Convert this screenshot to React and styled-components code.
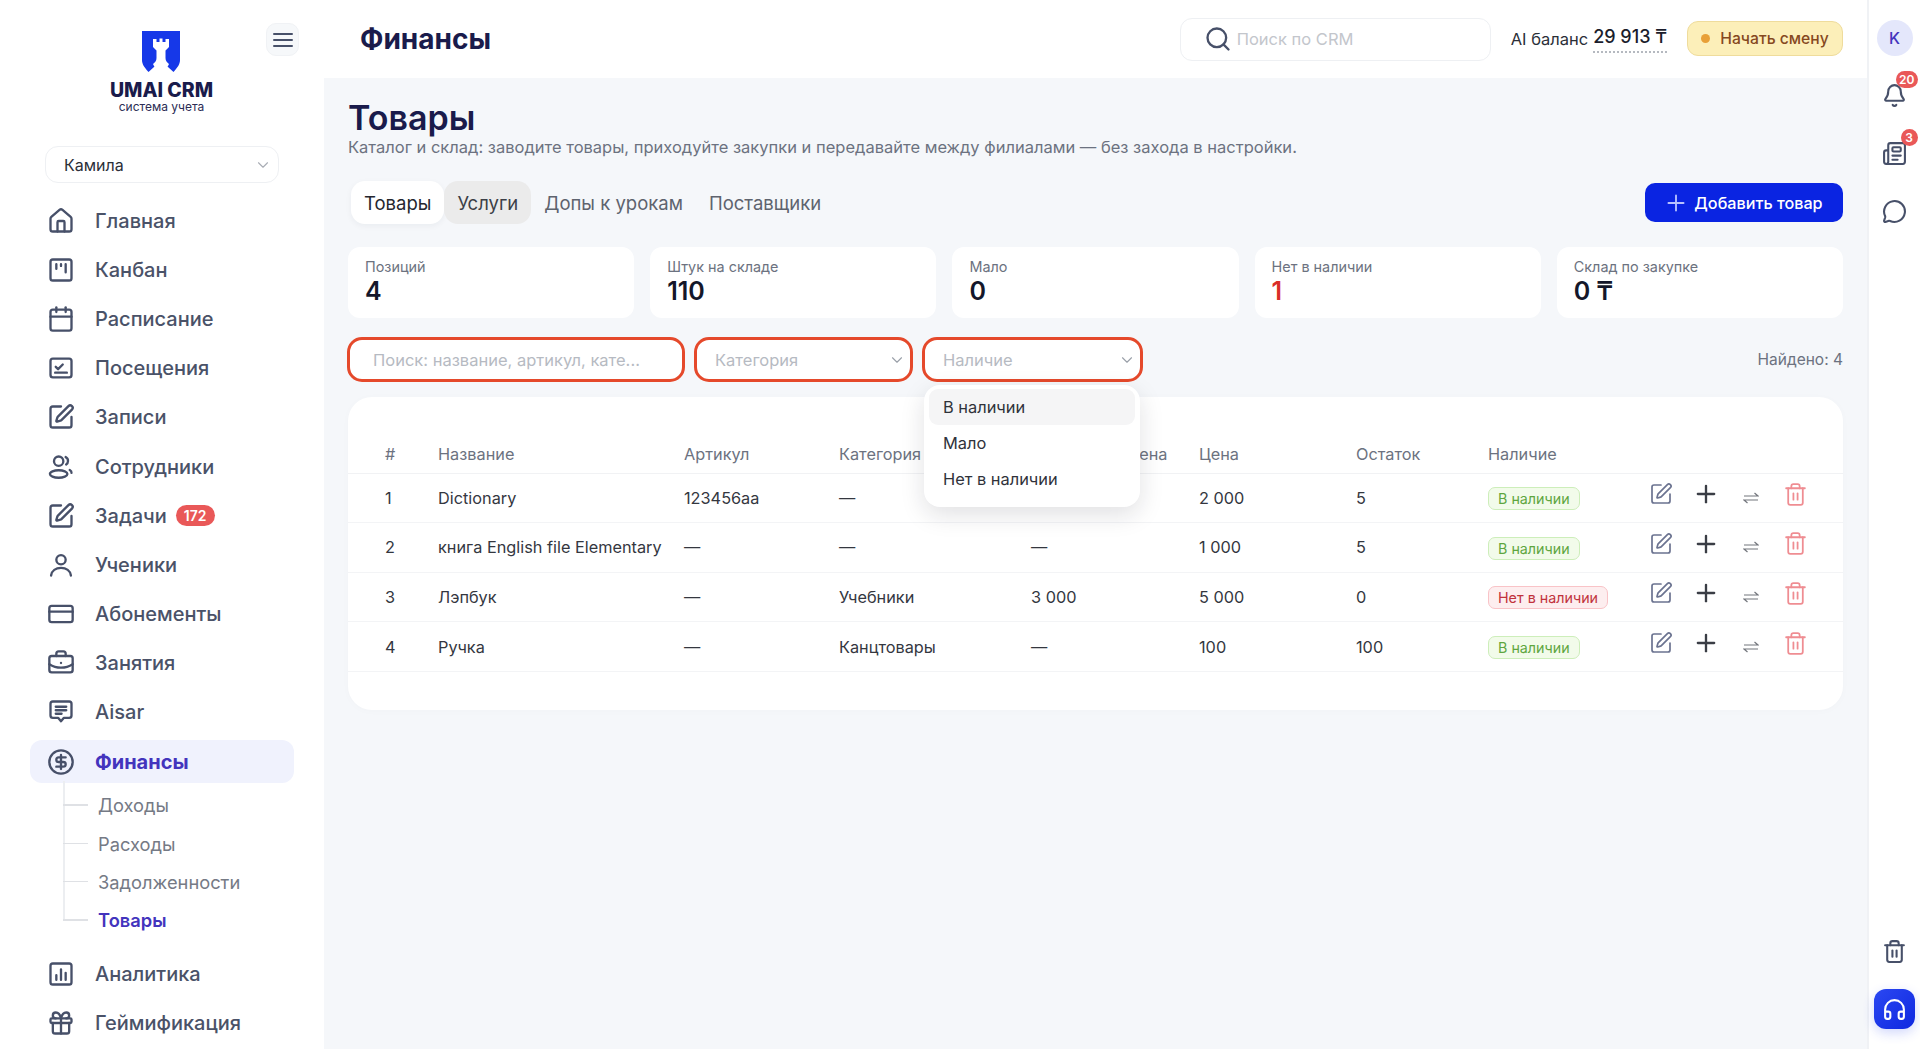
import React from "react";
import styled, { createGlobalStyle } from "styled-components";
import {
  Bell,
  BriefcaseBusiness,
  Calendar,
  ChevronDown,
  CircleDollarSign,
  CreditCard,
  Gift,
  Headphones,
  House,
  MessageCircle,
  Newspaper,
  Plus,
  Search,
  SquarePen,
  Trash2,
} from "lucide-react";

const GlobalStyle = createGlobalStyle`
  html, body {
    margin: 0;
    padding: 0;
    background: #f5f7fa;
    font-family: Inter, "Noto Sans", sans-serif;
  }
  * { box-sizing: border-box; }
`;

const Page = styled.div`
  display: grid;
  grid-template-columns: 324px 1fr 53px;
  width: 1920px;
  height: 1049px;
  overflow: hidden;
  background: #f5f7fa;
`;

/* sidebar */
const Sidebar = styled.aside`
  background: #fff;
  display: flex;
  flex-direction: column;
`;
const SidebarHead = styled.div`
  display: grid;
  grid-template-columns: 1fr auto 1fr;
  padding: 23px 25px 0 24px;
  height: 146px;
`;
const Logo = styled.div`
  grid-column: 2;
  display: flex;
  flex-direction: column;
  align-items: center;
  padding-top: 8px;
`;
const LogoName = styled.div`
  margin-top: 8px;
  font-size: 19.5px;
  line-height: 20px;
  font-weight: 800;
  color: #1a1b4b;
  white-space: nowrap;
`;
const LogoSub = styled.div`
  font-size: 12px;
  line-height: 14px;
  color: #2c2d55;
  white-space: nowrap;
`;
const MenuButton = styled.button`
  grid-column: 3;
  justify-self: end;
  width: 33px;
  height: 33px;
  border: 1px solid #f0f2f5;
  border-radius: 10px;
  background: #f6f8fa;
  display: flex;
  align-items: center;
  justify-content: center;
  padding: 0;
  color: #475069;
`;
const BranchSelect = styled.div`
  margin: 0 45px 16px 45px;
  height: 37px;
  border: 1px solid #eef0f3;
  border-radius: 13px;
  padding: 0 6px 0 18px;
  display: flex;
  align-items: center;
  justify-content: space-between;
  font-size: 16px;
  color: #2b2f38;
  svg { color: #a9adb5; }
`;
const Nav = styled.nav`
  display: flex;
  flex-direction: column;
  gap: 6px;
  padding: 0 30px 0 30px;
`;
const NavItem = styled.a`
  height: 43.2px;
  display: flex;
  align-items: center;
  gap: 20px;
  padding-left: 17px;
  border-radius: 12px;
  font-size: 20px;
  font-weight: ${(p) => (p.$active ? 700 : 500)};
  color: ${(p) => (p.$active ? "#4334bd" : "#4a5268")};
  background: ${(p) => (p.$active ? "#f0f2fd" : "transparent")};
  svg { color: #475069; flex: none; }
`;
const Count = styled.span`
  margin-left: -11px;
  height: 21px;
  padding: 0 8px;
  border-radius: 11px;
  background: #e95858;
  color: #fff;
  font-size: 14px;
  font-weight: 600;
  display: flex;
  align-items: center;
`;
const SubNav = styled.div`
  display: flex;
  flex-direction: column;
  margin: -3px 0 7px;
`;
const SubItem = styled.a`
  position: relative;
  height: 38.3px;
  padding-left: 68px;
  display: flex;
  align-items: center;
  font-size: 18.3px;
  font-weight: ${(p) => (p.$active ? 600 : 400)};
  color: ${(p) => (p.$active ? "#4334bd" : "#757a85")};
  &::before {
    content: "";
    position: absolute;
    left: 33px;
    top: -5px;
    height: ${(p) => (p.$active ? "24px" : "calc(100% + 5px)")};
    width: 2px;
    background: #eceef1;
  }
  &::after {
    content: "";
    position: absolute;
    left: 33px;
    top: 18px;
    width: 25px;
    height: 1.5px;
    background: #dfe1e5;
  }
`;

/* main column */
const Main = styled.div`
  display: flex;
  flex-direction: column;
  min-width: 0;
`;
const TopBar = styled.header`
  height: 78px;
  background: #fff;
  display: flex;
  align-items: center;
  padding: 0 24px 0 36px;
`;
const PageName = styled.div`
  font-size: 28px;
  font-weight: 700;
  color: #1a1b4b;
  margin-right: auto;
`;
const SearchBox = styled.div`
  width: 311px;
  height: 43px;
  border: 1px solid #eef0f3;
  border-radius: 12px;
  display: flex;
  align-items: center;
  gap: 5px;
  padding-left: 23px;
  font-size: 16.5px;
  color: #c3c6cc;
  margin-right: 20px;
  svg { color: #475069; flex: none; }
`;
const Balance = styled.div`
  display: flex;
  align-items: center;
  gap: 5px;
  font-size: 16.5px;
  color: #2b2f38;
  margin-right: 20px;
`;
const BalanceValue = styled.span`
  font-size: 18px;
  font-weight: 500;
  line-height: 24px;
  color: #1b1d2c;
  padding-bottom: 2px;
  border-bottom: 2px dotted #b5b9c0;
  white-space: nowrap;
`;
const ShiftButton = styled.button`
  width: 156px;
  height: 35px;
  margin-top: -1px;
  border: 1px solid #efdc9c;
  border-radius: 11px;
  background: #fcefb9;
  color: #86491f;
  font: 500 15.7px Inter, sans-serif;
  display: flex;
  align-items: center;
  justify-content: center;
  gap: 10px;
  padding: 0;
`;
const Dot = styled.i`
  width: 9px;
  height: 9px;
  border-radius: 50%;
  background: #e8a038;
`;
const Content = styled.main`
  position: relative;
  padding: 20px 24px 0;
`;
const Title = styled.h1`
  margin: 0;
  font-size: 34px;
  line-height: 39px;
  font-weight: 600;
  color: #1a1b4b;
`;
const Lead = styled.p`
  margin: 0;
  font-size: 16.5px;
  line-height: 20px;
  color: #6c7280;
`;
const TabsRow = styled.div`
  display: flex;
  align-items: center;
  justify-content: space-between;
  margin-top: 24px;
`;
const Tabs = styled.div`
  display: flex;
  align-items: center;
  margin-left: 3px;
`;
const Tab = styled.button`
  height: 43px;
  border: 0;
  padding: 0 13px;
  border-radius: 14px;
  font: 400 18.5px Inter, sans-serif;
  background: ${(p) => (p.$state === "active" ? "#fff" : p.$state === "hover" ? "#ebebeb" : "transparent")};
  color: ${(p) => (p.$state === "active" ? "#25272f" : p.$state === "hover" ? "#3c3f47" : "#5e636e")};
  box-shadow: ${(p) => (p.$state === "active" ? "0 2px 6px rgba(20,30,60,.05)" : "none")};
`;
const AddButton = styled.button`
  width: 198px;
  height: 39px;
  border: 0;
  border-radius: 10px;
  background: #0a24e2;
  color: #fff;
  font: 500 16.2px Inter, sans-serif;
  display: flex;
  align-items: center;
  justify-content: center;
  gap: 5px;
  padding: 0 2px 0 0;
  svg { color: #b9c3ff; }
`;
const Stats = styled.section`
  display: grid;
  grid-template-columns: repeat(5, 1fr);
  gap: 16px;
  margin-top: 23px;
`;
const StatCard = styled.div`
  height: 71px;
  background: #fff;
  border-radius: 12px;
  padding: 11px 17px 0;
`;
const StatLabel = styled.div`
  font-size: 14.4px;
  line-height: 18px;
  color: #6c7280;
`;
const StatValue = styled.div`
  font-size: 25px;
  line-height: 30px;
  font-weight: 600;
  color: ${(p) => (p.$danger ? "#d92d27" : "#14172a")};
`;
const Filters = styled.div`
  display: flex;
  align-items: center;
  margin: 19px 0 15px -1px;
  gap: 9px;
`;
const Field = styled.div`
  width: ${(p) => p.$w}px;
  height: 45px;
  border: 3px solid #e5492b;
  border-radius: 15px;
  background: #fff;
  display: flex;
  align-items: center;
  justify-content: space-between;
  padding: 0 4px 0 ${(p) => p.$pad}px;
  font-size: 16.5px;
  color: #b6bac2;
  white-space: nowrap;
  svg { color: #9aa0a9; flex: none; }
`;
const Found = styled.div`
  margin-left: auto;
  font-size: 15.5px;
  color: #6c7280;
`;
const TableCard = styled.section`
  background: #fff;
  border-radius: 24px;
  padding: 38px 0;
  box-shadow: 0 1px 8px rgba(20, 30, 60, 0.02);
`;
const Table = styled.table`
  width: 100%;
  border-collapse: collapse;
  table-layout: fixed;
  font-size: 16.3px;
  color: #34373f;
  th {
    height: 38px;
    padding: 0;
    text-align: left;
    font-weight: 400;
    color: #6c7280;
    white-space: nowrap;
    border-bottom: 1px solid #f1f2f4;
  }
  td {
    height: 49.6px;
    padding: 0;
    white-space: nowrap;
    border-bottom: 1px solid #f3f4f6;
  }
  th:first-child, td:first-child { padding-left: 37px; }
`;
const Badge = styled.span`
  display: inline-flex;
  align-items: center;
  height: 23px;
  padding: 0 9px;
  border-radius: 7px;
  font-size: 14.3px;
  position: relative;
  top: 1px;
  border: 1px solid ${(p) => (p.$out ? "#f9c3c7" : "#cdeeba")};
  background: ${(p) => (p.$out ? "#fdeeef" : "#f2fbea")};
  color: ${(p) => (p.$out ? "#c1323c" : "#5ea63f")};
`;
const Actions = styled.div`
  display: grid;
  grid-template-columns: repeat(4, 45px);
  justify-items: center;
  align-items: center;
`;
const ActionIcon = styled.span`
  display: flex;
  margin-top: ${(p) => (p.$low ? "0" : "-7px")};
  color: ${(p) => p.$color};
`;
const Dropdown = styled.div`
  position: absolute;
  left: 600px;
  top: 307px;
  width: 216px;
  height: 122px;
  background: #fff;
  border-radius: 16px;
  padding: 4px 5px;
  box-shadow: 0 8px 24px rgba(20, 25, 40, 0.13);
`;
const Option = styled.div`
  height: 36px;
  display: flex;
  align-items: center;
  padding-left: 14px;
  border-radius: 9px;
  font-size: 16.4px;
  color: #2f323a;
  background: ${(p) => (p.$active ? "#f5f5f6" : "transparent")};
`;

/* right rail */
const Rail = styled.aside`
  background: #fff;
  border-left: 2px solid #f0f2f5;
  display: flex;
  flex-direction: column;
  align-items: center;
  padding: 20px 0;
  color: #475069;
`;
const Avatar = styled.div`
  width: 36px;
  height: 36px;
  border-radius: 50%;
  background: #e4e7fb;
  color: #4334bd;
  font-size: 16px;
  font-weight: 500;
  display: flex;
  align-items: center;
  justify-content: center;
`;
const RailIcon = styled.div`
  position: relative;
  width: 28px;
  height: 28px;
  margin-top: ${(p) => p.$top}px;
  display: flex;
  align-items: center;
  justify-content: center;
`;
const RailBadge = styled.span`
  position: absolute;
  top: -10px;
  right: -9px;
  min-width: 17px;
  height: 17px;
  padding: 0 3px;
  border-radius: 9px;
  background: #e95858;
  color: #fff;
  font-size: 12px;
  font-weight: 600;
  display: flex;
  align-items: center;
  justify-content: center;
`;
const HelpButton = styled.button`
  width: 41px;
  height: 40px;
  margin-top: 24px;
  border: 0;
  padding: 0;
  border-radius: 12px;
  background: linear-gradient(135deg, #2b48f2, #0f28e0);
  color: #fff;
  display: flex;
  align-items: center;
  justify-content: center;
  box-shadow: 0 4px 12px rgba(30, 60, 240, 0.2);
`;

const Glyph = ({ children }) => (
  <svg width="28" height="28" viewBox="0 0 24 24" fill="none" stroke="currentColor" strokeWidth="2" strokeLinecap="round" strokeLinejoin="round">
    {children}
  </svg>
);

const KanbanIcon = () => (
  <Glyph>
    <rect x="3" y="3" width="18" height="18" rx="2" />
    <path d="M8 7v4M12 7v1.5M16 7v7" />
  </Glyph>
);
const AttendanceIcon = () => (
  <Glyph>
    <rect x="3" y="4" width="18" height="16" rx="2" />
    <path d="M7.5 11l2 2 4-4M7 16h10" />
  </Glyph>
);
const StaffIcon = () => (
  <Glyph>
    <circle cx="10" cy="7" r="4" />
    <ellipse cx="10" cy="18" rx="7.5" ry="3.2" />
    <path d="M16 3.5a3.6 3.6 0 0 1 2 3.3 3.6 3.6 0 0 1-1.6 3M19.5 14.5c1 .6 1.6 1.5 1.5 2.5" />
  </Glyph>
);
const StudentIcon = () => (
  <Glyph>
    <circle cx="12" cy="7.5" r="4" />
    <path d="M3.5 21c.6-4 4-6.5 8.500-6.500s7.900 2.500 8.500 6.500" />
  </Glyph>
);
const AisarIcon = () => (
  <Glyph>
    <path d="M5 3h14a2 2 0 0 1 2 2v10a2 2 0 0 1-2 2h-4.500L12 20l-2.500-3H5a2 2 0 0 1-2-2V5a2 2 0 0 1 2-2z" />
    <path d="M7.500 7.500h9M7.500 10.500h9M7.500 13.500h5" />
  </Glyph>
);
const ChartIcon = () => (
  <Glyph>
    <rect x="3" y="3" width="18" height="18" rx="2" />
    <path d="M8 17v-4M12 17V8M16 17v-6" />
  </Glyph>
);
const HouseIcon = () => <House size={28} />;
const CalendarIcon = () => <Calendar size={28} />;
const PenIcon = () => <SquarePen size={28} />;
const CardIcon = () => <CreditCard size={28} />;
const CaseIcon = () => <BriefcaseBusiness size={28} />;
const DollarIcon = () => <CircleDollarSign size={28} />;
const GiftIcon = () => <Gift size={28} />;

const SwapIcon = () => (
  <svg width="16" height="12" viewBox="0 0 16 12" fill="none" stroke="currentColor" strokeWidth="1.2">
    <path d="M1 4h14L11.500 1M15 8H1l3.500 3" />
  </svg>
);

const LogoMark = () => (
  <svg width="38" height="41" viewBox="0 0 38 41">
    <path d="M0 0h38v29c0 4-2 7-6.500 12L26 36 12 36l-5.500 5C2 36 0 33 0 29z" fill="#1638e8" />
    <path d="M11 8h3.500v3h3V7.500h3V11h3V8H27v8l-3.500 3.500V27c0 3 1.500 4.500 3.500 6l-1.500 3L22 41H16l-3.500-5L11 33c2-1.500 3.500-3 3.500-6v-7.500L11 16z" fill="#fff" />
  </svg>
);

const navTop = [
  ["Главная", HouseIcon],
  ["Канбан", KanbanIcon],
  ["Расписание", CalendarIcon],
  ["Посещения", AttendanceIcon],
  ["Записи", PenIcon],
  ["Сотрудники", StaffIcon],
  ["Задачи", PenIcon, 172],
  ["Ученики", StudentIcon],
  ["Абонементы", CardIcon],
  ["Занятия", CaseIcon],
  ["Aisar", AisarIcon],
];
const subNav = ["Доходы", "Расходы", "Задолженности", "Товары"];
const navBottom = [
  ["Аналитика", ChartIcon],
  ["Геймификация", GiftIcon],
];
const stats = [
  ["Позиций", "4"],
  ["Штук на складе", "110"],
  ["Мало", "0"],
  ["Нет в наличии", "1", true],
  ["Склад по закупке", "0 ₸"],
];
const products = [
  [1, "Dictionary", "123456aa", "—", "", "2 000", 5, "В наличии"],
  [2, "книга English file Elementary", "—", "—", "—", "1 000", 5, "В наличии"],
  [3, "Лэпбук", "—", "Учебники", "3 000", "5 000", 0, "Нет в наличии"],
  [4, "Ручка", "—", "Канцтовары", "—", "100", 100, "В наличии"],
];
const columns = [90, 246, 155, 192, 168, 157, 132, 150, 205];
const headers = ["#", "Название", "Артикул", "Категория", "Закупочная цена", "Цена", "Остаток", "Наличие", ""];

function NavRow({ item, active }) {
  const [label, Icon, count] = item;
  return (
    <NavItem $active={active}>
      <Icon />
      {label}
      {count && <Count>{count}</Count>}
    </NavItem>
  );
}

export default function App() {
  return (
    <Page>
      <GlobalStyle />
      <Sidebar>
        <SidebarHead>
          <Logo>
            <LogoMark />
            <LogoName>UMAI CRM</LogoName>
            <LogoSub>система учета</LogoSub>
          </Logo>
          <MenuButton>
            <svg width="22" height="16" viewBox="0 0 22 16" stroke="currentColor" strokeWidth="2" strokeLinecap="round">
              <path d="M2 2h18M2 8h18M2 14h18" />
            </svg>
          </MenuButton>
        </SidebarHead>
        <BranchSelect>
          Камила
          <ChevronDown size={18} strokeWidth={1.5} />
        </BranchSelect>
        <Nav>
          {navTop.map((item) => (
            <NavRow key={item[0]} item={item} />
          ))}
          <NavRow item={["Финансы", DollarIcon]} active />
          <SubNav>
            {subNav.map((label) => (
              <SubItem key={label} $active={label === "Товары"}>
                {label}
              </SubItem>
            ))}
          </SubNav>
          {navBottom.map((item) => (
            <NavRow key={item[0]} item={item} />
          ))}
        </Nav>
      </Sidebar>

      <Main>
        <TopBar>
          <PageName>Финансы</PageName>
          <SearchBox>
            <Search size={28} />
            Поиск по CRM
          </SearchBox>
          <Balance>
            AI баланс
            <BalanceValue>29 913 ₸</BalanceValue>
          </Balance>
          <ShiftButton>
            <Dot />
            Начать смену
          </ShiftButton>
        </TopBar>
        <Content>
          <Title>Товары</Title>
          <Lead>Каталог и склад: заводите товары, приходуйте закупки и передавайте между филиалами — без захода в настройки.</Lead>
          <TabsRow>
            <Tabs>
              <Tab $state="active">Товары</Tab>
              <Tab $state="hover">Услуги</Tab>
              <Tab>Допы к урокам</Tab>
              <Tab>Поставщики</Tab>
            </Tabs>
            <AddButton>
              <Plus size={26} strokeWidth={1.7} />
              Добавить товар
            </AddButton>
          </TabsRow>
          <Stats>
            {stats.map(([label, value, danger]) => (
              <StatCard key={label}>
                <StatLabel>{label}</StatLabel>
                <StatValue $danger={danger}>{value}</StatValue>
              </StatCard>
            ))}
          </Stats>
          <Filters>
            <Field $w={338} $pad={23}>Поиск: название, артикул, кате...</Field>
            <Field $w={219} $pad={18}>
              Категория
              <ChevronDown size={18} strokeWidth={1.5} />
            </Field>
            <Field $w={221} $pad={18}>
              Наличие
              <ChevronDown size={18} strokeWidth={1.5} />
            </Field>
            <Found>Найдено: 4</Found>
          </Filters>
          <TableCard>
            <Table>
              <colgroup>
                {columns.map((w, i) => (
                  <col key={i} width={w} />
                ))}
              </colgroup>
              <thead>
                <tr>
                  {headers.map((h, i) => (
                    <th key={i}>{h}</th>
                  ))}
                </tr>
              </thead>
              <tbody>
                {products.map((row) => (
                  <tr key={row[0]}>
                    {row.slice(0, 7).map((cell, i) => (
                      <td key={i}>{cell}</td>
                    ))}
                    <td>
                      <Badge $out={row[7] === "Нет в наличии"}>{row[7]}</Badge>
                    </td>
                    <td>
                      <Actions>
                        <ActionIcon $color="#6b7390"><SquarePen size={24} strokeWidth={1.7} /></ActionIcon>
                        <ActionIcon $color="#3a3d45"><Plus size={28} /></ActionIcon>
                        <ActionIcon $color="#73767d" $low><SwapIcon /></ActionIcon>
                        <ActionIcon $color="#ef8d92"><Trash2 size={25} strokeWidth={1.7} /></ActionIcon>
                      </Actions>
                    </td>
                  </tr>
                ))}
              </tbody>
            </Table>
          </TableCard>
          <Dropdown>
            <Option $active>В наличии</Option>
            <Option>Мало</Option>
            <Option>Нет в наличии</Option>
          </Dropdown>
        </Content>
      </Main>

      <Rail>
        <Avatar>K</Avatar>
        <RailIcon $top={25}>
          <Bell size={25} />
          <RailBadge>20</RailBadge>
        </RailIcon>
        <RailIcon $top={30}>
          <Newspaper size={25} />
          <RailBadge>3</RailBadge>
        </RailIcon>
        <RailIcon $top={30}>
          <MessageCircle size={25} />
        </RailIcon>
        <RailIcon $top={712}>
          <Trash2 size={25} />
        </RailIcon>
        <HelpButton>
          <Headphones size={25} />
        </HelpButton>
      </Rail>
    </Page>
  );
}
